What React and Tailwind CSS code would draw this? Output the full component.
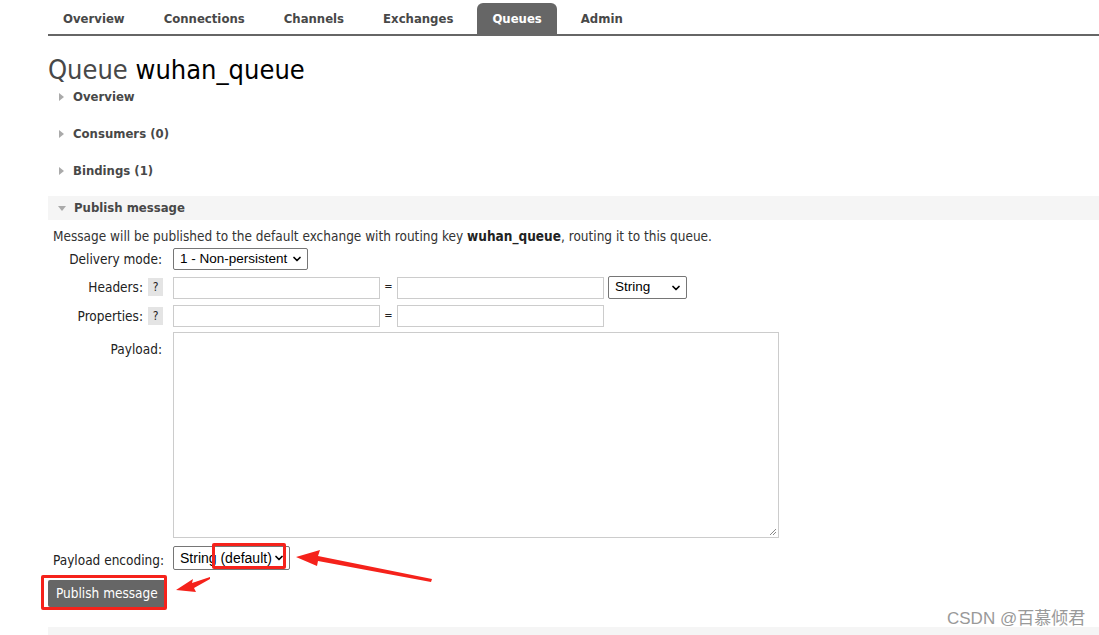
import { ChevronDown } from "lucide-react";

const TABS = ["Overview", "Connections", "Channels", "Exchanges", "Queues", "Admin"];
const FONT = { fontFamily: '"DejaVu Sans Condensed", "DejaVu Sans", sans-serif' };

function Tabs() {
  return (
    <div className="ml-[48px] flex h-[36px] items-end border-b-2 border-[#666]">
      {TABS.map((t) => (
        <div
          key={t}
          className={`flex h-[31px] items-center rounded-t-md px-[15px] text-[13px] font-bold ${
            t === "Queues" ? "bg-[#666] text-white" : "text-[#484848]"
          } ${t === "Overview" ? "ml-[0px]" : "ml-[9px]"}`}
        >
          {t}
        </div>
      ))}
    </div>
  );
}

function Section({ title, open }) {
  return (
    <div className={`flex h-[24px] items-center pl-[10px] text-[13px] font-bold text-[#484848] ${open ? "bg-[#f5f5f5]" : ""}`}>
      {open ? (
        <span className="mr-[8px] h-0 w-0 border-x-[4px] border-t-[5px] border-x-transparent border-t-[#aaa]" />
      ) : (
        <span className="ml-[1px] mr-[9px] h-0 w-0 border-y-[4px] border-l-[5px] border-y-transparent border-l-[#aaa]" />
      )}
      {title}
    </div>
  );
}

function Select({ label, w, h = "h-[22px]", size = "text-[13.5px]" }) {
  return (
    <div
      className={`flex items-center justify-between whitespace-nowrap rounded-[2px] border border-[#767676] bg-white pl-[6px] pr-[4px] text-black ${w} ${h} ${size}`}
      style={{ fontFamily: '"Liberation Sans", Arial, sans-serif' }}
    >
      <span>{label}</span>
      <ChevronDown size={12} strokeWidth={3.5} />
    </div>
  );
}

function Input() {
  return <div className="h-[22px] w-[207px] border border-[#ccc] bg-white" />;
}

function Help() {
  return <span className="ml-[5px] flex h-[18px] w-[15px] items-center justify-center bg-[#e4e4e4] text-[12px]">?</span>;
}

export default function App() {
  return (
    <div className="relative h-[635px] w-[1099px] overflow-hidden bg-white text-[#333]" style={FONT}>
      <Tabs />
      <div className="ml-[48px]">
        <h1 className="mt-[19px] h-[30px] text-[27px] leading-[30px] text-[#484848]">
          Queue <span className="text-black">wuhan_queue</span>
        </h1>
        <div className="flex flex-col gap-[13px]">
          <Section title="Overview" />
          <Section title="Consumers (0)" />
          <Section title="Bindings (1)" />
          <Section title="Publish message" open />
        </div>
        <p className="mt-[8px] pl-[5px] text-[13.5px] leading-[16px] text-[#333]">
          Message will be published to the default exchange with routing key <b className="text-[#222]">wuhan_queue</b>, routing it to this queue.
        </p>
        <div className="mt-[4px] grid grid-cols-[125px_1fr] gap-y-[6px] text-[13.5px] text-[#222]">
          <div className="flex h-[22px] items-center justify-end pr-[11px]">Delivery mode:</div>
          <div className="flex items-center">
            <Select label="1 - Non-persistent" w="w-[135px]" />
          </div>
          <div className="flex h-[22px] items-center justify-end pr-[10px]">
            Headers:<Help />
          </div>
          <div className="flex items-center">
            <Input />
            <span className="w-[17px] text-center text-[11px]">=</span>
            <Input />
            <div className="ml-[4px]">
              <Select label="String" w="w-[79px]" h="h-[23px]" />
            </div>
          </div>
          <div className="flex h-[22px] items-center justify-end pr-[10px]">
            Properties:<Help />
          </div>
          <div className="flex items-center">
            <Input />
            <span className="w-[17px] text-center text-[11px]">=</span>
            <Input />
          </div>
          <div className="flex justify-end pr-[11px] pt-[6px]">Payload:</div>
          <div className="relative -mt-[1px] h-[206px] w-[606px] border border-[#ccc]">
            <svg className="absolute bottom-[1px] right-[1px]" width="9" height="9" viewBox="0 0 9 9">
              <path d="M8 2 L2 8 M8 5 L5 8" stroke="#888" strokeWidth="1" />
            </svg>
          </div>
          <div className="mt-[2px] flex h-[24px] items-center justify-start pl-[5px] pt-[4px]">Payload encoding:</div>
          <div className="mt-[2px]">
            <Select label="String (default)" w="w-[117px]" h="h-[24px]" size="text-[14px]" />
          </div>
        </div>
        <button className="mt-[10px] h-[27px] rounded-[2px] bg-[#666] px-[8px] text-[13.5px] text-white">
          Publish message
        </button>
        <div className="mt-[20px] h-[24px] bg-[#f5f5f5]" />
      </div>

      <div
        className="absolute left-[947px] top-[606px] text-[17px] text-[#999]"
        style={{ fontFamily: '"Liberation Sans", "Noto Sans CJK SC", sans-serif' }}
      >
        CSDN @百慕倾君
      </div>

      <div className="absolute left-[212px] top-[543px] h-[26px] w-[74px] rounded-[2px] border-[3px] border-[#f5221b]" />
      <div className="absolute left-[41px] top-[575px] h-[35px] w-[126px] rounded-[2px] border-[3px] border-[#f5221b]" />
      <svg className="absolute left-0 top-0" width="1099" height="635">
        <polygon points="432,579 318,556 320,550 296,557 317,566 318,561 431,582" fill="#f5221b" />
        <polygon points="210,577 192,583 193,579 176,590 196,592 194,588 210,579" fill="#f5221b" />
      </svg>
    </div>
  );
}
